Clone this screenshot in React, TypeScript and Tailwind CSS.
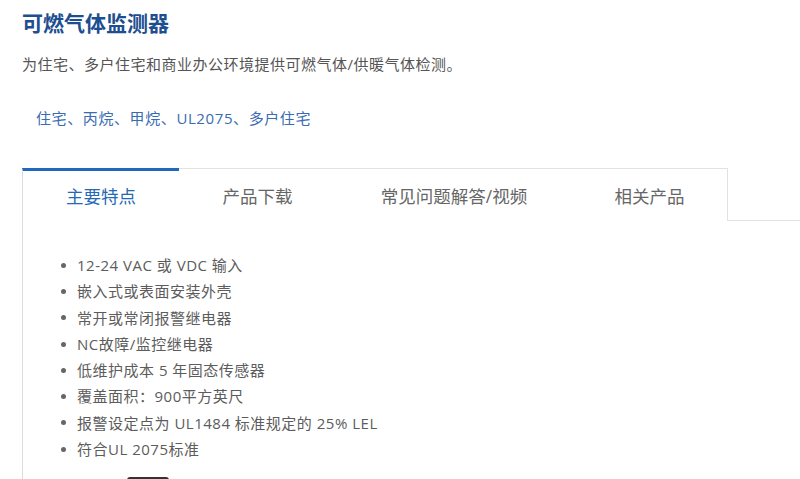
const font = "font-['Open_Sans','Noto_Sans_CJK_SC',sans-serif]";

const tabs = [
  { label: "主要特点", w: "w-[157px]" },
  { label: "产品下载", w: "w-[157px]" },
  { label: "常见问题解答/视频", w: "w-[236px]" },
  { label: "相关产品", w: "w-[156px]" },
];

const features = [
  "12-24 VAC 或 VDC 输入",
  "嵌入式或表面安装外壳",
  "常开或常闭报警继电器",
  "NC故障/监控继电器",
  "低维护成本 5 年固态传感器",
  "覆盖面积：900平方英尺",
  "报警设定点为 UL1484 标准规定的 25% LEL",
  "符合UL 2075标准",
];

export default function App() {
  return (
    <div className={`h-[479px] w-[800px] overflow-hidden bg-white ${font}`}>
      <div className="pl-[22px] pt-[8px]">
        <h1 className="text-[21px] font-bold leading-[30px] text-[#1d4e8f]">可燃气体监测器</h1>
        <p className="mt-[14px] text-[15px] leading-[24px] tracking-[0.5px] text-[#555]">
          为住宅、多户住宅和商业办公环境提供可燃气体/供暖气体检测。
        </p>
        <p className="mt-[30px] pl-[14px] text-[15px] leading-[24px] tracking-[0.6px] text-[#3a6cb2]">
          住宅、丙烷、甲烷、UL2075、多户住宅
        </p>
      </div>

      <div className="mt-[38px] pl-[22px]">
        {/* 选项卡 */}
        <div className="flex h-[53px]">
          {tabs.map((t, i) =>
            i === 0 ? (
              <div
                key={t.label}
                className={`${t.w} flex items-center justify-center border-l border-t-[3px] border-l-[#dcdcdc] border-t-[#1f68bb] pt-[1px] text-[17.5px] text-[#2568b4]`}
              >
                {t.label}
              </div>
            ) : (
              <div
                key={t.label}
                className={`${t.w} flex items-center justify-center border-t border-[#e2e2e2] pt-[3px] text-[17.5px] text-[#666] ${
                  i === tabs.length - 1 ? "border-r" : ""
                }`}
              >
                {t.label}
              </div>
            )
          )}
          <div className="flex-1 border-b border-[#e2e2e2]" />
        </div>

        {/* 内容 */}
        <div className="border-l border-[#dcdcdc] pt-[31px]">
          <ul className="pl-[38px]">
            {features.map((f) => (
              <li key={f} className="flex items-center text-[15px] leading-[26.3px] tracking-[0.5px] text-[#5c5c5c]">
                <span className="mr-[11px] h-[5px] w-[5px] rounded-full bg-[#666]" />
                {f}
              </li>
            ))}
          </ul>
          <div className="ml-[104px] mt-[15px] h-[20px] w-[42px] rounded-[3px] bg-[#333]" />
        </div>
      </div>
    </div>
  );
}
